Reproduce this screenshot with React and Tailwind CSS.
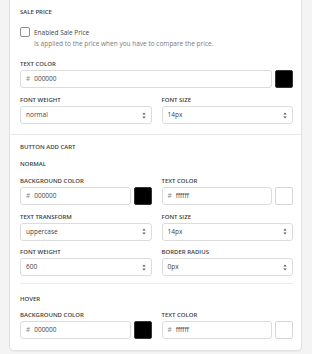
import React from "react";

const font = { fontFamily: '"Open Sans", "Noto Sans", sans-serif' };

function Label({ children }) {
  return (
    <div className="text-[6px] leading-[9px] h-[9px] font-semibold uppercase text-[#3d3d3d] mb-[1px] whitespace-nowrap">
      {children}
    </div>
  );
}

function ColorInput({ value, swatch }) {
  return (
    <div className="flex items-center gap-[3px]">
      <div className="flex-1 h-[18px] border border-[#dcdcdc] rounded-[3px] flex items-center pl-[5px] text-[6.5px] text-[#444] bg-white">
        <span className="text-[#8a8a8a] mr-[4px]">#</span>
        <span>{value}</span>
      </div>
      <div
        className={
          swatch === "black"
            ? "w-[18px] h-[18px] rounded-[2px] bg-black border border-[#333]"
            : "w-[18px] h-[18px] rounded-[2px] bg-white border border-[#d6d6d6]"
        }
      />
    </div>
  );
}

function Arrows() {
  return (
    <svg width="4" height="7" viewBox="0 0 4 7" className="text-[#555]">
      <path d="M2 0.5 L3.6 2.6 L0.4 2.6 Z" fill="currentColor" />
      <path d="M2 6.5 L3.6 4.4 L0.4 4.4 Z" fill="currentColor" />
    </svg>
  );
}

function Select({ value }) {
  return (
    <div className="h-[18px] border border-[#dcdcdc] rounded-[3px] flex items-center justify-between pl-[5px] pr-[5px] text-[6.5px] text-[#444] bg-white">
      <span>{value}</span>
      <Arrows />
    </div>
  );
}

function Field({ label, children }) {
  return (
    <div>
      <Label>{label}</Label>
      {children}
    </div>
  );
}

export default function App() {
  return (
    <div className="w-[312px] h-[354px] overflow-hidden bg-[#f4f4f4]" style={font}>
      <div className="ml-[9px] w-[293px] bg-white border border-t-0 border-[#e2e2e2] rounded-b-[5px] shadow-[0_1px_1px_rgba(0,0,0,0.04)]">
        {/* Sale price */}
        <div className="pl-[10px] pr-[8px] pt-[8px] pb-[10px]">
          <Label>Sale price</Label>
          <div className="mt-[10px] flex items-center gap-[4px] h-[10px]">
            <div className="w-[10px] h-[10px] rounded-[2px] border border-[#8f8f8f] bg-white" />
            <span className="text-[6.5px] leading-[9px] text-[#444]">Enabled Sale Price</span>
          </div>
          <div className="ml-[14px] mt-[2px] text-[6.5px] leading-[9px] text-[#7a7a7a] whitespace-nowrap">
            Is applied to the price when you have to compare the price.
          </div>
          <div className="mt-[12px]">
            <Field label="Text color">
              <ColorInput value="000000" swatch="black" />
            </Field>
          </div>
          <div className="mt-[8px] grid grid-cols-2 gap-x-[10px]">
            <Field label="Font weight">
              <Select value="normal" />
            </Field>
            <Field label="Font size">
              <Select value="14px" />
            </Field>
          </div>
        </div>

        <div className="h-px bg-[#e8e8e8]" />

        {/* Button add cart */}
        <div className="pl-[10px] pr-[8px] pt-[8px] pb-[11px]">
          <Label>Button add cart</Label>
          <div className="mt-[8px]">
            <Label>Normal</Label>
          </div>
          <div className="mt-[8px] grid grid-cols-2 gap-x-[10px] gap-y-[7.5px]">
            <Field label="Background color">
              <ColorInput value="000000" swatch="black" />
            </Field>
            <Field label="Text color">
              <ColorInput value="ffffff" swatch="white" />
            </Field>
            <Field label="Text transform">
              <Select value="uppercase" />
            </Field>
            <Field label="Font size">
              <Select value="14px" />
            </Field>
            <Field label="Font weight">
              <Select value="600" />
            </Field>
            <Field label="Border radius">
              <Select value="0px" />
            </Field>
          </div>

          <div className="mt-[7px] h-px bg-[#ececec]" />

          <div className="mt-[11px]">
            <Label>Hover</Label>
          </div>
          <div className="mt-[7px] grid grid-cols-2 gap-x-[10px]">
            <Field label="Background color">
              <ColorInput value="000000" swatch="black" />
            </Field>
            <Field label="Text color">
              <ColorInput value="ffffff" swatch="white" />
            </Field>
          </div>
        </div>
      </div>
    </div>
  );
}
